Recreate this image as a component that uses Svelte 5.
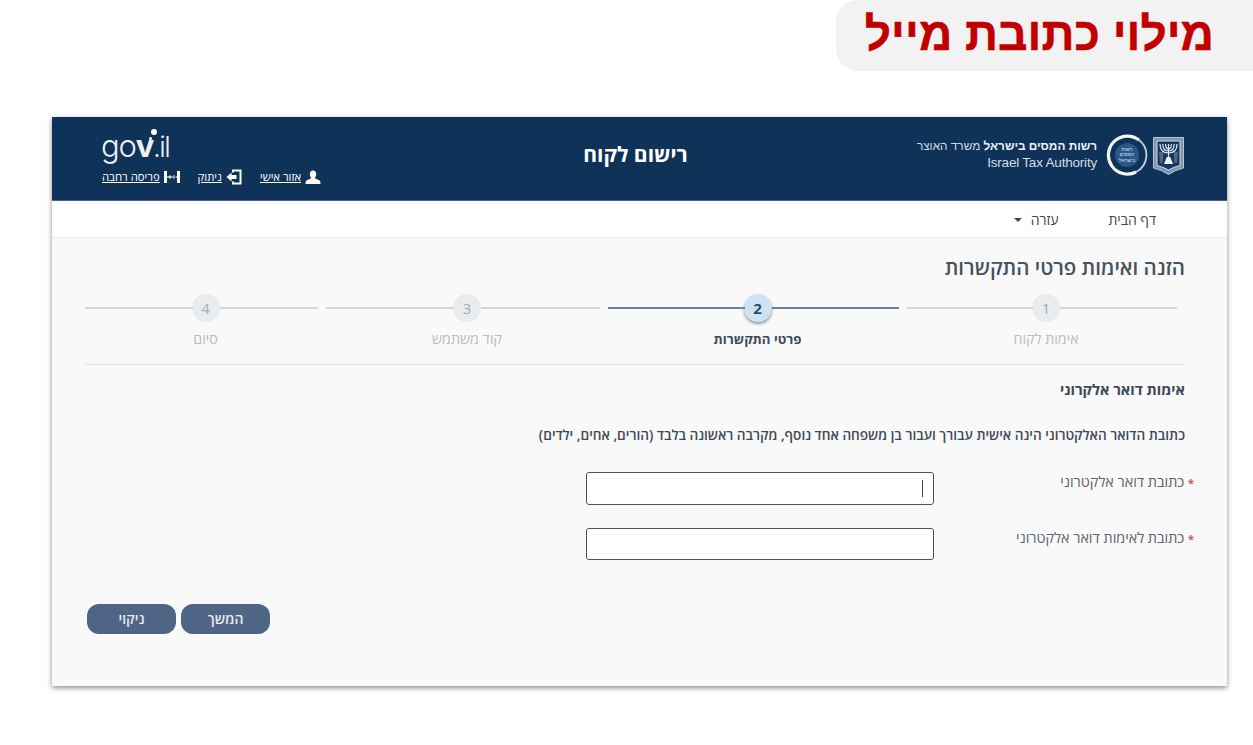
<script>
  const steps = [
    { n: 1, label: 'אימות לקוח', cls: 's1' },
    { n: 2, label: 'פרטי התקשרות', cls: 's2 active' },
    { n: 3, label: 'קוד משתמש', cls: 's3' },
    { n: 4, label: 'סיום', cls: 's4' }
  ]
</script>

<div class="page" dir="rtl">
  <div class="banner-row">
    <h1 class="banner">מילוי כתובת מייל</h1>
  </div>

  <div class="card">
    <header class="top">
      <div class="brand">
        <svg class="emblem" viewBox="0 0 31 38" width="31" height="38">
          <path d="M0.5 0.5H30.5V31Q22 33 15.5 37.5Q9 33 0.5 31Z" fill="#7f97ae" stroke="#b9c5d1" stroke-width="1"/>
          <path d="M4 4H27V28.5Q20.5 30 15.5 33Q10.5 30 4 28.5Z" fill="#16385e" stroke="#d3dbe3" stroke-width="1"/>
          <g fill="none" stroke="#e3e8ed" stroke-width="1.2">
            <path d="M7 7Q7 16 15.5 16Q24 16 24 7"/>
            <path d="M9.8 7Q9.8 14 15.5 14Q21.2 14 21.2 7"/>
            <path d="M12.6 7Q12.6 12 15.5 12Q18.4 12 18.4 7"/>
            <path d="M15.5 7V20"/>
          </g>
          <path d="M11 27L13.8 20H17.2L20 27Z" fill="#f2f4f6"/>
          <path d="M10.5 15H6L7 26H9.5ZM20.5 15H25L24 26H21.5Z" fill="#4b6a8a"/>
        </svg>
        <svg class="ring" viewBox="0 0 42 42" width="42" height="42">
          <path d="M33 6A19 19 0 0 1 30 38" fill="none" stroke="#c9d3dd" stroke-width="1.8"/>
          <path d="M33 6A19 19 0 1 0 30 38" fill="none" stroke="#f4f6f8" stroke-width="3.2"/>
          <circle cx="21" cy="21" r="12" fill="#2a5787"/>
          <text x="21" y="16.5" class="tiny">רשות</text>
          <text x="21" y="22" class="tiny">המסים</text>
          <text x="21" y="27.5" class="tiny">בישראל</text>
        </svg>
        <div class="brand-text">
          <div><b>רשות המסים בישראל</b> משרד האוצר</div>
          <div class="en">Israel Tax Authority</div>
        </div>
      </div>

      <div class="app-title">רישום לקוח</div>

      <div class="gov">
        <div class="gov-logo" dir="ltr">go<b>v</b><i></i><i class="small"></i><span>.il</span></div>
        <div class="links">
          <a href="#a">
            <svg viewBox="0 0 16 14" width="16" height="14"><path d="M8 0.5C5.8 0.5 4.6 2.3 4.8 4.4C5 6.3 6 7.6 6.3 8.2L1.8 10.2C0.8 10.7 0.5 12 0.5 14H15.5C15.5 12 15.2 10.7 14.2 10.2L9.7 8.2C10 7.6 11 6.3 11.2 4.4C11.4 2.3 10.2 0.5 8 0.5Z" fill="#fff"/></svg>
            <span>אזור אישי</span>
          </a>
          <a href="#b">
            <svg viewBox="0 0 16 16" width="16" height="16"><path d="M6 0.5H15.5V15.5H6V12.5H8V13.5H13.5V2.5H8V3.5H6Z" fill="#fff"/><path d="M0.5 8L5.5 3.5V6H10.5V10H5.5V12.5Z" fill="#fff"/></svg>
            <span>ניתוק</span>
          </a>
          <a href="#c">
            <svg viewBox="0 0 16 12" width="16" height="12"><path d="M0 0H3V12H0ZM13 0H16V12H13ZM3 5.5H13V6.5H3ZM4 6L6.5 3.8V8.2ZM12 6L9.5 3.8V8.2Z" fill="#fff"/></svg>
            <span>פריסה רחבה</span>
          </a>
        </div>
      </div>
    </header>

    <nav class="menu">
      <a href="#home">דף הבית</a>
      <a href="#help" class="help">עזרה<i class="caret"></i></a>
    </nav>

    <main class="body">
      <h2 class="title">הזנה ואימות פרטי התקשרות</h2>

      <div class="steps">
        {#each steps as s}
          <div class="step {s.cls}">
            <div class="track">
              <span class="line"></span>
              <span class="dot">{s.n}</span>
              <span class="line after"></span>
            </div>
            <div class="step-label">{s.label}</div>
          </div>
        {/each}
      </div>

      <h3 class="section">אימות דואר אלקרוני</h3>
      <p class="note">כתובת הדואר האלקטרוני הינה אישית עבורך ועבור בן משפחה אחד נוסף, מקרבה ראשונה בלבד (הורים, אחים, ילדים)</p>

      <div class="field first">
        <label for="mail"><em>*</em> כתובת דואר אלקטרוני</label>
        <div class="box"><span class="cursor"></span><input id="mail" type="text" /></div>
      </div>
      <div class="field second">
        <label for="mail2"><em>*</em> כתובת לאימות דואר אלקטרוני</label>
        <div class="box"><input id="mail2" type="text" /></div>
      </div>

      <div class="actions">
        <button>המשך</button>
        <button>ניקוי</button>
      </div>
    </main>
  </div>
</div>

<style>
  :global(body) {
    margin: 0;
    background: #fff;
    font-family: "Open Sans", "Liberation Sans", sans-serif;
  }

  .page {
    width: 1253px;
    height: 745px;
    overflow: hidden;
  }

  .banner-row {
    display: flex;
    justify-content: flex-start;
    height: 71px;
    margin-bottom: 46px;
  }
  .banner {
    width: 417px;
    height: 71px;
    box-sizing: border-box;
    margin: 0;
    padding: 0 39px 0 0;
    background: #f2f2f2;
    border-radius: 22px 0 0 22px;
    color: #c00000;
    font: bold 46px/69px "Liberation Sans", Arial, sans-serif;
    -webkit-text-stroke: 0.5px #c00000;
    white-space: nowrap;
  }

  .card {
    width: 1175px;
    height: 569px;
    margin-right: 26px;
    background: #f9f9f9;
    box-shadow: 0 2px 5px rgba(0, 0, 0, 0.45);
  }

  .top {
    height: 84px;
    box-sizing: border-box;
    background: #0f3259;
    border-bottom: 1px solid #47647f;
    color: #fff;
    display: grid;
    grid-template-columns: 400px 1fr 400px;
  }
  .brand {
    display: flex;
    align-items: flex-start;
    padding: 18px 43px 0 0;
    font-family: "Liberation Sans", Arial, sans-serif;
  }
  .emblem { margin: 2px 0 0 5px; }
  .ring { margin-left: 9px; margin-top: -1px; }
  .tiny {
    font-size: 5px;
    fill: #dbe4ec;
    text-anchor: middle;
    font-family: "Liberation Sans", sans-serif;
  }
  .brand-text {
    font-size: 11.8px;
    line-height: 16px;
    color: #d4dbe3;
    padding-top: 3px;
    white-space: nowrap;
  }
  .brand-text b { color: #eef1f4; }
  .en {
    font-size: 13.5px;
    line-height: 17px;
    letter-spacing: -0.2px;
  }

  .app-title {
    text-align: center;
    font: bold 21px/75px "Open Sans", "Liberation Sans", sans-serif;
    padding-right: 8px;
  }

  .gov {
    padding: 11px 0 0 50px;
    display: flex;
    flex-direction: column;
    align-items: flex-end;
  }
  .gov-logo {
    align-self: flex-end;
    width: 218px;
    height: 37px;
    font: 300 31px/36px Inter, "Liberation Sans", sans-serif;
    letter-spacing: -1.2px;
    position: relative;
    color: #edf1f4;
    margin-left: -1px;
  }
  .gov-logo b { font-weight: 700; }
  .gov-logo span {
    font-size: 28px;
    letter-spacing: -1.6px;
  }
  .gov-logo i {
    position: absolute;
    left: 50px;
    top: 1px;
    width: 6px;
    height: 6px;
    border-radius: 50%;
    background: #fff;
  }
  .gov-logo i.small {
    left: 48px;
    top: 9px;
    width: 3px;
    height: 3px;
  }
  .links {
    display: flex;
    gap: 18px;
    width: 218px;
    margin-top: 4px;
    font: 11.3px/14px "Open Sans", "Liberation Sans", sans-serif;
    justify-content: flex-end;
  }
  .links a {
    display: flex;
    align-items: center;
    gap: 4px;
    color: #fff;
    white-space: nowrap;
  }
  .links span { text-decoration: underline; }

  .menu {
    height: 37px;
    box-sizing: border-box;
    background: #fff;
    border-bottom: 1px solid #ececec;
    display: flex;
    align-items: center;
    padding-right: 71px;
    gap: 50px;
    font-size: 14px;
  }
  .menu a {
    color: #3b4754;
    text-decoration: none;
  }
  .caret {
    display: inline-block;
    margin-right: 9px;
    vertical-align: 3px;
    border: 4px solid transparent;
    border-top-color: #3b4754;
    border-bottom: 0;
  }

  .body {
    padding: 0 42px 0 33px;
  }
  .title {
    margin: 0;
    padding-top: 17px;
    font-size: 20.5px;
    line-height: 24px;
    font-weight: 600;
    color: #46525e;
  }

  .steps {
    display: flex;
    gap: 8px;
    margin: 15px 8px 0 0;
    padding-bottom: 17px;
    position: relative;
  }
  .steps::after {
    content: "";
    position: absolute;
    bottom: 0;
    right: -8px;
    left: 0;
    height: 1px;
    background: #e3e3e3;
  }
  .s1 { width: 270px; }
  .s2 { width: 291px; }
  .s3 { width: 274px; }
  .s4 { width: 233px; }

  .track {
    display: flex;
    align-items: center;
    height: 28px;
  }
  .line {
    flex: 1 1 0;
    height: 2px;
    background: #d6d6d6;
  }
  .line.after { flex-basis: 8px; }
  .dot {
    width: 28px;
    height: 28px;
    border-radius: 50%;
    background: #e9ecef;
    color: #a6acb2;
    font: 15px/28px "Open Sans", sans-serif;
    text-align: center;
    margin: 0 -1px;
  }
  .step-label {
    margin-top: 8px;
    text-align: center;
    padding-left: 8px;
    font-size: 14.3px;
    line-height: 18px;
    color: #b9bcc0;
  }
  .active .line { background: #6f8196; }
  .active .dot {
    background: #cfe2f3;
    color: #2b4a6f;
    font-weight: 700;
    box-shadow: 0 2px 3px rgba(60, 80, 100, 0.55);
  }
  .active .step-label {
    color: #3d4a57;
    font-size: 13.2px;
    font-weight: 700;
  }

  .section {
    margin: 15px 0 0;
    font-size: 14.6px;
    line-height: 18px;
    font-weight: 700;
    color: #3d4a57;
  }
  .note {
    margin: 28px 0 0;
    font-size: 13.6px;
    line-height: 18px;
    font-weight: 600;
    color: #3d4a57;
    white-space: nowrap;
  }

  .field {
    display: flex;
    align-items: flex-start;
    margin-right: -9px;
  }
  .field.first { margin-top: 28px; }
  .field.second { margin-top: 23px; }
  .field label {
    width: 260px;
    flex: none;
    padding-top: 1px;
    font-size: 14.4px;
    line-height: 18px;
    color: #5b6570;
  }
  .field em {
    color: #d9534f;
    font-size: 11px;
    font-weight: 700;
    font-style: normal;
  }
  .box {
    width: 348px;
    height: 33px;
    box-sizing: border-box;
    position: relative;
    background: #fff;
    border: 1px solid #3f566f;
    border-radius: 3px;
  }
  .second .box { height: 32px; }
  .box input {
    width: 100%;
    height: 100%;
    box-sizing: border-box;
    border: 0;
    background: none;
    outline: 0;
    padding: 0;
  }
  .cursor {
    position: absolute;
    right: 10px;
    top: 7px;
    width: 1px;
    height: 17px;
    background: #444;
  }

  .actions {
    display: flex;
    justify-content: flex-end;
    gap: 5px;
    margin-top: 44px;
    padding-left: 2px;
  }
  .actions button {
    width: 89px;
    height: 30px;
    padding: 0;
    border: 0;
    border-radius: 12px;
    background: #4f6585;
    color: #e8ebef;
    font: 600 14px/30px "Open Sans", sans-serif;
  }
</style>
